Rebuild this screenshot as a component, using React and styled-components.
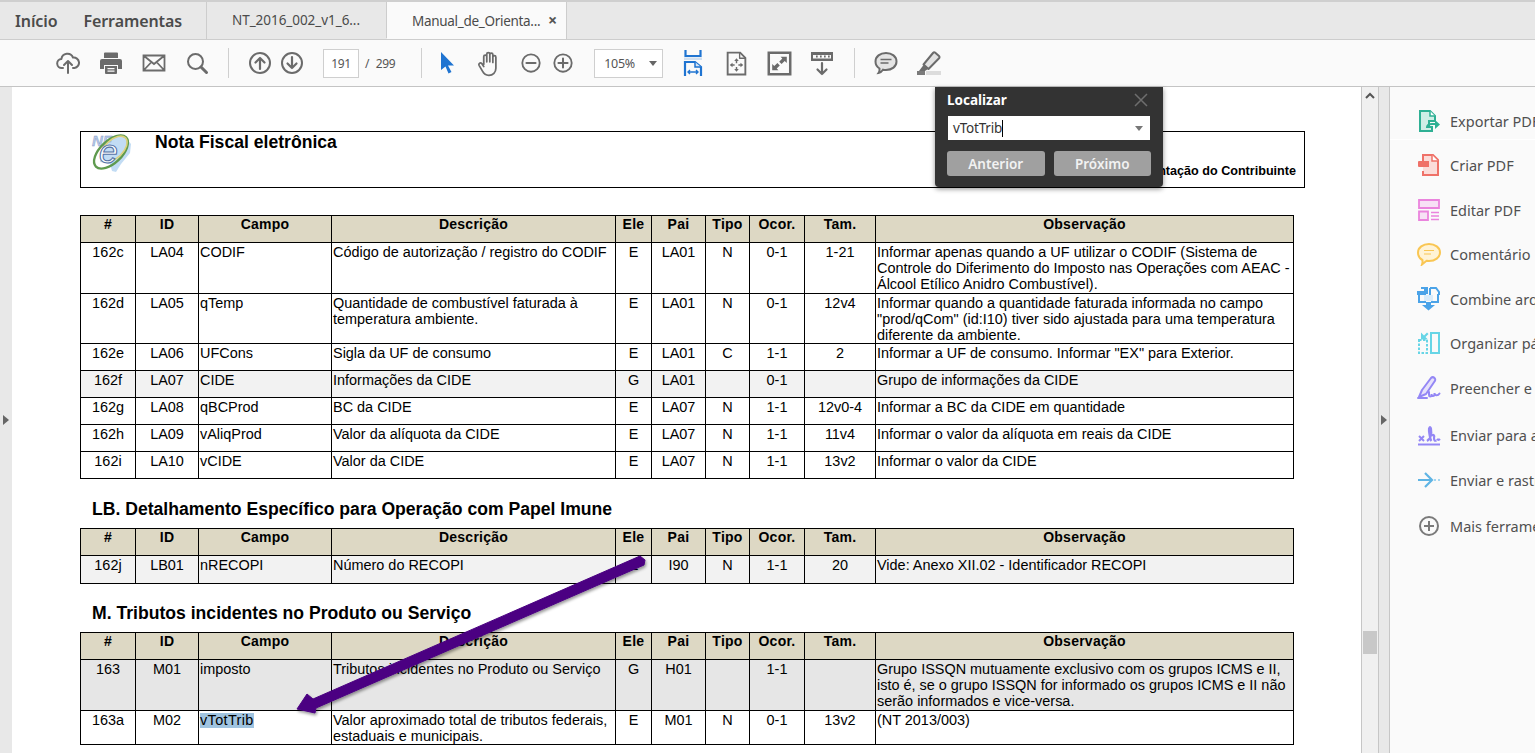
import React from "react";
import styled, { createGlobalStyle } from "styled-components";

const Global = createGlobalStyle`
  html, body { margin: 0; padding: 0; height: 100%; overflow: hidden; background: #fff; }
  #root { height: 753px; overflow: hidden; }
  * { box-sizing: border-box; }
`;

const UI = `"Noto Sans", "Open Sans", sans-serif`;
const DOC = `"Liberation Sans", Arial, sans-serif`;

const Shell = styled.div`
  width: 1535px; height: 753px; display: flex; flex-direction: column; overflow: hidden;
  font-family: ${UI}; position: relative;
`;
const TabBar = styled.div`
  flex: 0 0 39px; display: flex; background: #e8e8e8;
  border-top: 2px solid #cfcfcf; border-bottom: 1px solid #cdcdcd; 
`;
const NavTabs = styled.div`
  width: 207px; display: flex; align-items: center; gap: 26px; padding: 0 0 0 15px;
  border-right: 1px solid #cdcdcd;
`;
const NavLink = styled.span`
  font-size: 16px; font-weight: 600; color: #4b4b4b; letter-spacing: -0.1px;
`;
const DocTab = styled.div`
  width: ${p => p.$w}px; height: ${p => p.$active ? 37 : 36}px; display: flex; align-items: center;
  padding-left: 25px; font-size: 13.5px; color: #4b4b4b; position: relative; z-index: 1;
  background: ${p => p.$active ? "#fafafa" : "#e8e8e8"};
  border-right: 1px solid #cdcdcd;
  letter-spacing: ${p => p.$active ? -0.3 : -0.05}px;
`;
const TabClose = styled.span`
  position: absolute; left: 161px; top: 7px; font-size: 16px; font-weight: 700; color: #555;
`;
const Toolbar = styled.div`
  flex: 0 0 47px; display: flex; align-items: center; background: #fafafa; border-bottom: 1px solid #c4c4c4;
  padding-left: 52px;
`;
const Group = styled.div`
  display: flex; align-items: center; gap: ${p => p.$gap || 0}px; margin-left: ${p => p.$ml || 0}px;
`;
const Tool = styled.div`
  width: 32px; height: 32px; display: flex; align-items: center; justify-content: center; color: #6b6b6b;
`;
const Sep = styled.div`
  width: 1px; height: 30px; background: #cfcfcf; margin-left: ${p => p.$ml}px;
`;
const PageBox = styled.div`
  width: 36px; height: 29px; margin-left: 15px; background: #fff; border: 1px solid #cfcfcf;
  display: flex; align-items: center; justify-content: center; font-size: 12px; color: #555; letter-spacing: -0.3px;
`;
const PageTotal = styled.span`
  font-size: 12px; color: #555; margin-left: 6px; letter-spacing: -0.4px; word-spacing: 4px; white-space: pre;
`;
const ZoomBox = styled.div`
  width: 69px; height: 29px; margin-left: 15px; background: #fff; border: 1px solid #cfcfcf;
  display: flex; align-items: center; justify-content: space-between; padding: 0 5px 0 9px;
  font-size: 12.5px; color: #555; letter-spacing: -0.3px;
`;
const Caret = styled.span`
  width: 0; height: 0; border-left: 4px solid transparent; border-right: 4px solid transparent;
  border-top: 5px solid ${p => p.$c || "#666"};
`;
const Main = styled.div`
  flex: 1; display: flex; min-height: 0; position: relative;
`;
const Rail = styled.div`
  flex: 0 0 12px; background: #e8e8e8; display: flex; align-items: center; justify-content: flex-start;
  padding-left: 3px;
`;
const TriRight = styled.span`
  display: block; width: 0; height: 0; border-top: 5px solid transparent; border-bottom: 5px solid transparent;
  border-left: 6px solid #666;
`;
const PageArea = styled.div`
  flex: 0 0 1349px; background: #fff; padding: 44px 0 0 68px; position: relative; overflow: hidden;
  font-family: ${DOC}; color: #000;
`;
const DocHead = styled.div`
  width: 1225px; height: 57px; border: 1px solid #000; border-bottom-width: 1.5px; position: relative;
  display: flex; background: #fff;
`;
const LogoCell = styled.div`
  width: 65px; padding: 0 0 0 9px;
`;
const DocTitle = styled.div`
  font-size: 17.6px; font-weight: 700; padding: 0 0 0 9px; flex: 1;
`;
const DocSub = styled.div`
  align-self: flex-end; font-size: 12.6px; font-weight: 700; padding: 0 8px 9px 0;
`;
const Table = styled.table`
  width: 1213px; table-layout: fixed; border-collapse: collapse; margin-top: ${p => p.$mt || 0}px;
  font-size: 14.45px; line-height: 16.1px;
  td, th { border: 1px solid #000; padding: 1px 1px 0; vertical-align: top; overflow: hidden; }
  th { padding-top: 0; }
`;
const HeadCell = styled.th`
  background: #ddd8c4; font-weight: 700; text-align: center; font-size: 14px; letter-spacing: 0.25px;
`;
const Row = styled.tr`
  height: ${p => p.$h}px; background: ${p => p.$bg || "#fff"};
`;
const Cell = styled.td`
  text-align: ${p => p.$center ? "center" : "left"}; white-space: pre-line;
`;
const SectionTitle = styled.div`
  font-size: 17.6px; font-weight: 700; margin: ${p => p.$mt}px 0 0 12px; line-height: 20px; height: ${p => p.$h}px;
`;
const Highlight = styled.span`
  background: #a0c4e0; display: inline-block; line-height: 15px; letter-spacing: 0.35px;
`;
const Arrow = styled.svg`
  position: absolute; left: 0; top: 0; pointer-events: none;
`;
const ScrollTrack = styled.div`
  flex: 0 0 17px; background: #f0f0f0; border-left: 1px solid #c6c6c6; position: relative;
  display: flex; justify-content: center; padding-top: 5px;
`;
const Thumb = styled.div`
  position: absolute; left: 1px; right: 1px; top: 544px; height: 23px; background: #c8c8c8;
`;
const Handle = styled.div`
  flex: 0 0 12px; background: #e8e8e8; border-left: 1px solid #c6c6c6; border-right: 1px solid #c6c6c6;
  display: flex; align-items: center; padding-left: 2px;
`;
const Panel = styled.div`
  flex: 1; background: #fafafa; padding-top: 12px; overflow: hidden; position: relative;
`;
const PanelItem = styled.div`
  height: ${p => p.$h}px; display: flex; align-items: center; padding-left: 26px; gap: 9px; white-space: nowrap;
  font-size: 14.5px; color: #505050;
  ${p => p.$line ? "padding-top: 3px; margin-bottom: 3px; border-bottom: 1px solid #fff;" : ""}
`;
const PanelIcon = styled.span`
  flex: 0 0 25px; display: flex; justify-content: center;
`;
const Finder = styled.div`
  position: absolute; left: 935px; top: 0; width: 228px; height: 100px; background: #333; border-radius: 0 0 4px 4px;
  box-shadow: 0 2px 5px rgba(0,0,0,.45); padding: 3px 12px 0; z-index: 5; font-family: ${UI};
`;
const FinderHead = styled.div`
  display: flex; justify-content: space-between; align-items: center; height: 19px; padding-right: 3px;
  font-size: 13.5px; font-weight: 700; color: #fff;
`;
const FinderInput = styled.div`
  margin: 7px 0 0 1px; width: 202px; height: 24px; background: #fff; display: flex; align-items: center;
  justify-content: space-between; padding: 0 7px 0 5px; font-size: 13.5px; color: #333; letter-spacing: -0.2px;
`;
const TextCaret = styled.span`
  display: inline-block; width: 1px; height: 17px; background: #000; vertical-align: middle;
`;
const FinderButtons = styled.div`
  display: flex; gap: 9px; margin-top: 11px;
`;
const FinderButton = styled.div`
  width: 98px; height: 25px; background: #a0a0a0; border-radius: 3px; color: #f2f2f2; font-size: 13.5px; font-weight: 600;
  display: flex; align-items: center; justify-content: center;
`;

const s = { fill: "none", stroke: "currentColor", strokeWidth: 2, strokeLinecap: "round", strokeLinejoin: "round" };
const Ico = ({ children, size = 24, vb = "0 0 24 24" }) => <svg width={size} height={size} viewBox={vb}>{children}</svg>;

const Upload = () => <Ico><path {...s} d="M7 17H6a4.5 4.5 0 0 1-.6-9A6 6 0 0 1 17 6.6 5 5 0 0 1 18.5 17H17" /><path {...s} d="M12 22V10M8 14l4-4 4 4" /></Ico>;
const Printer = () => <Ico><path fill="currentColor" d="M6 1.500h12a1 1 0 0 1 1 1V7H5V2.500a1 1 0 0 1 1-1zM3 8h18a2 2 0 0 1 2 2v8h-4v-4H5v4H1v-8a2 2 0 0 1 2-2z" /><path fill="currentColor" d="M6 15h12v7a1 1 0 0 1-1 1H7a1 1 0 0 1-1-1z" /><path fill="#fafafa" d="M8.500 17h7v1.200h-7zM8.500 19.500h7v1.200h-7z" /></Ico>;
const Mail = () => <Ico><path {...s} strokeWidth="1.800" strokeLinecap="butt" strokeLinejoin="miter" d="M1.500 4.500h21v15h-21zM1.500 4.500l10.500 8.500 10.500-8.500M1.500 19.500l8-8.500M22.500 19.500l-8-8.500" /></Ico>;
const Search = () => <Ico><circle {...s} cx="10.500" cy="10.500" r="7.500" /><path {...s} strokeWidth="3" d="M16 16l5.500 5.500" /></Ico>;
const CircleArrow = ({ up }) => <Ico><circle {...s} cx="12" cy="12" r="10" />{up ? <path {...s} strokeWidth="2.200" d="M12 18V7M7.500 11.500L12 7l4.500 4.500" /> : <path {...s} strokeWidth="2.200" d="M12 6v11M7.500 12.500L12 17l4.500-4.500" />}</Ico>;
const Pointer = () => <Ico><path fill="#1f74d1" d="M6 1l13 13.500h-6l3.500 6.500-3 1.500-3-7L6 19z" /></Ico>;
const HandIco = () => <Ico size={28}><path {...s} strokeWidth="1.500" d="M7.500 13V6.500a1.300 1.300 0 0 1 2.600 0V11M10.100 11V4.300a1.300 1.300 0 0 1 2.600 0V11M12.700 11V4.800a1.300 1.300 0 0 1 2.600 0V11M15.300 11.500V7a1.300 1.300 0 0 1 2.600 0v9.500c0 3.500-2.500 6-6 6-3 0-4.500-1.500-5.500-3.500L3.500 14c-.8-1.500 1.200-2.800 2.300-1.500L7.500 15" /></Ico>;
const ZoomC = ({ plus }) => <Ico size={22}><circle {...s} cx="12" cy="12" r="9.500" /><path {...s} strokeWidth="2.200" d={plus ? "M7 12h10M12 7v10" : "M7 12h10"} /></Ico>;
const FitIco = () => <Ico size={26} vb="0 0 26 26"><g fill="none" stroke="#1f74d1" strokeWidth="2.200"><path d="M5.500 0v6h15V0" /><path d="M5 26v-14h10l6 5v9" /></g><path fill="#cfdff0" d="M4 7.500h18V10H4z" /><path d="M15 12v5h6" fill="#d8e6f4" stroke="#1f74d1" strokeWidth="1.500" /><path stroke="#1f74d1" strokeWidth="1.400" fill="none" d="M8 22h10M10 20l-2 2 2 2M16 20l2 2-2 2" /></Ico>;
const PageMove = () => <Ico size={25}><path {...s} strokeWidth="1.800" strokeLinecap="butt" strokeLinejoin="miter" d="M3.500 1.500h12l5 5v16h-17z" /><path {...s} strokeWidth="1.300" strokeLinecap="butt" d="M15 1.500v5.500h5.500" /><path fill="currentColor" d="M12 7l2.200 2.700h-1.500v2h-1.400v-2H9.800zM12 20l-2.200-2.700h1.500v-2h1.400v2h1.500zM5.500 13.500l2.700-2.200v1.500h2v1.400h-2v1.500zM18.500 13.500l-2.700 2.200v-1.500h-2v-1.400h2v-1.500z" /></Ico>;
const Expand = () => <Ico size={25}><path {...s} strokeWidth="2.400" strokeLinecap="butt" strokeLinejoin="miter" d="M1.700 1.700h20.600v20.600H1.700z" /><path fill="#fff" d="M3 3h2v.8H3zM6 3h2v.8H6zM9 3h2v.8H9z" /><path fill="currentColor" d="M13 5.500h6v6l-2-2-3 3-2.300-2.300 3-3zM11 18.500H5v-6l2 2 3-3 2.300 2.300-3 3z" /></Ico>;
const Ruler = () => <Ico size={26} vb="0 0 26 26"><path fill="currentColor" d="M2 2h22v9H2z" /><path fill="#fafafa" d="M4 5h18v3.500H4z" /><path fill="currentColor" d="M7 5.500h1.700v2H7zM11 5.500h1.700v2H11zM15 5.500h1.700v2H15zM19 5.500h1.700v2H19z" /><path {...s} strokeWidth="2.200" d="M13 13v11M8.500 19.500L13 24l4.500-4.500" /></Ico>;
const Comment = () => <Ico size={26} vb="0 0 26 26"><path fill="#e4e4e4" stroke="currentColor" strokeWidth="2" d="M13 3c6 0 10.500 3.500 10.500 8.500S19 20 13 20c-1 0-2 0-3-.3-1 1.500-2.500 3-4.500 3.300 1-1.500 1.200-3 1-4.500C4 17 2.500 14.500 2.500 11.500 2.500 6.500 7 3 13 3z" /><path stroke="currentColor" strokeWidth="1.300" fill="none" d="M7.500 9.500h11M7.500 13h8" /></Ico>;
const Marker = () => <Ico size={26} vb="0 0 26 26"><path fill="#e2e2e2" stroke="currentColor" strokeWidth="2" strokeLinejoin="round" d="M19 2.500l4 3.500c.8.800.6 1.800-.2 2.500L12.500 19l-5-4.500L17 3c.6-.7 1.300-1 2-.5z" /><path fill="currentColor" d="M7.500 15l4.500 4-3 2H3z" /><path fill="#dcdcdc" d="M10 21h15v4H10z" /><path fill="currentColor" d="M1 21h8v4H1z" opacity=".9" /></Ico>;

const ExportIco = () => <Ico><path fill="#cfeee6" stroke="#2fb094" strokeWidth="2" d="M3 2h10l5 5v5h-6v6h3v4H3z" /><path fill="#fff" stroke="#2fb094" strokeWidth="1.500" d="M13 2v5h5" /><path stroke="#2fb094" strokeWidth="2.200" fill="none" d="M10 19c0-3 2-4 5-4h4" /><path fill="#2fb094" d="M18 11l5 4.500-5 4.500z" /></Ico>;
const CreateIco = () => <Ico><path fill="#fbdcd9" stroke="#ef7168" strokeWidth="2" d="M6 12V2h10l5 5v15H6v-4" /><path fill="#fff" stroke="#ef7168" strokeWidth="1.500" d="M15 2v6h6" /><path fill="#ef7168" d="M2 8h10v6H2a1 1 0 0 1-1-1V9a1 1 0 0 1 1-1z" /></Ico>;
const EditIco = () => <Ico><path fill="#f7e1f5" stroke="#ea84dd" strokeWidth="1.800" d="M2 2h20v8H2zM2 13.500h9V22H2z" /><path stroke="#ea84dd" strokeWidth="1.300" d="M14 14.500h8M14 18h8M14 21.500h8" /></Ico>;
const CommentIco = () => <Ico><path fill="#fff3d6" stroke="#f9c653" strokeWidth="2" d="M12 2c6 0 11 3.500 11 8.500S18 19 12 19c-1 0-2 0-2.500-.2L5 22.500c.5-1.500.7-3 .4-4.500C2.500 16.500 1 13.500 1 10.500 1 5.500 6 2 12 2z" /><path stroke="#f9c653" strokeWidth="1.200" d="M7 8.500h10M7 12h7" /></Ico>;
const CombineIco = () => <Ico size={25} vb="0 0 25 25"><path fill="#d9ecfb" d="M8 9h9v6H8z" /><path fill="none" stroke="#4ba3e8" strokeWidth="2" d="M3 8v8h7M5 2h6v6M9 9V2M22 8v8h-7M14 2h6l3 4v3M14 9V2" /><path fill="#4ba3e8" d="M1 5h7v4H1zM10 16h5v3h4l-6.500 5.500L6 19h4z" /></Ico>;
const OrganizeIco = () => <Ico><path fill="none" stroke="#67d5e6" strokeWidth="2" d="M14 2h8v20h-8z" /><path fill="none" stroke="#67d5e6" strokeWidth="2" strokeDasharray="2.500 1.500" d="M2 9h8v13H2z" /><path fill="#67d5e6" d="M4 1.500v7h7L8.500 6l3-3L10 1.500l-3 3z" /></Ico>;
const FillIco = () => <Ico><path fill="#e6e1fb" stroke="#9487f5" strokeWidth="2" strokeLinejoin="round" d="M2 21l3-7L14 2c1-1 2.500-1 3.500 0 1 1 1 2.500 0 3.500L9 18z" /><path fill="none" stroke="#9487f5" strokeWidth="2" strokeLinecap="round" d="M1 22h9M12 16v3c0 2 2.500 2 2.500 0v-1c0 2.500 3 2.500 3 0v-1c0 3 3.500 3 5 .5" /></Ico>;
const SignIco = () => <Ico><path stroke="#9487f5" strokeWidth="2" d="M1 21.500h22M2 13l5 5M7 13l-5 5" /><path fill="none" stroke="#9487f5" strokeWidth="2.200" d="M10 18c3-2 5-6 4-12-.5-3-2.500-2-2 2 .5 4 1.500 9 2.500 10M15 13c1-2 3-1 2 2 0 3 1 3 2.500 2.500M20 16c1 1 2 1 3 0" /></Ico>;
const TrackIco = () => <Ico><path fill="none" stroke="#5fb4e4" strokeWidth="2.200" d="M1 12h13M8 5l7 7-7 7" /><path stroke="#a3d6f0" strokeWidth="2" strokeDasharray="2 2" d="M17 12h7" /></Ico>;
const MoreIco = () => <Ico><circle cx="12" cy="12" r="9" fill="none" stroke="#7a7a7a" strokeWidth="2" /><path stroke="#7a7a7a" strokeWidth="2" d="M12 7v10M7 12h10" /></Ico>;

const Logo = () => (
  <svg width="44" height="42" viewBox="0 0 44 42">
    <path d="M22 4l13 1 6 7-1 9-9 11-5 8-4-1-2-7-10-2 2-12z" fill="#a8cdf0" opacity=".7" />
    <text x="2" y="14" fontFamily={DOC} fontSize="15" fontStyle="italic" fontWeight="700" fill="#b6c9e8" stroke="#7f97c4" strokeWidth=".4">NF</text>
    <ellipse cx="21" cy="20" rx="21" ry="11" transform="rotate(-44 21 20)" fill="none" stroke="#5f9a4e" strokeWidth="2.300" />
    <ellipse cx="24" cy="17" rx="16" ry="9" transform="rotate(-44 24 17)" fill="none" stroke="#dcd27c" strokeWidth="1.600" />
    <text x="9" y="31" fontFamily={DOC} fontSize="34" fontStyle="italic" fill="#fff" stroke="#5573a6" strokeWidth="1.100">e</text>
  </svg>
);

const cols = [55, 63, 133, 284, 36, 54, 44, 55, 71, 418];
const heads = ["#", "ID", "Campo", "Descrição", "Ele", "Pai", "Tipo", "Ocor.", "Tam.", "Observação"];

const t1 = [
  [51, "", "162c", "LA04", "CODIF", "Código de autorização / registro do CODIF", "E", "LA01", "N", "0-1", "1-21", "Informar apenas quando a UF utilizar o CODIF (Sistema de\nControle do Diferimento do Imposto nas Operações com AEAC -\nÁlcool Etílico Anidro Combustível)."],
  [50, "", "162d", "LA05", "qTemp", "Quantidade de combustível faturada à\ntemperatura ambiente.", "E", "LA01", "N", "0-1", "12v4", "Informar quando a quantidade faturada informada no campo\n\"prod/qCom\" (id:I10) tiver sido ajustada para uma temperatura\ndiferente da ambiente."],
  [27, "", "162e", "LA06", "UFCons", "Sigla da UF de consumo", "E", "LA01", "C", "1-1", "2", "Informar a UF de consumo. Informar \"EX\" para Exterior."],
  [27, "#f2f2f2", "162f", "LA07", "CIDE", "Informações da CIDE", "G", "LA01", "", "0-1", "", "Grupo de informações da CIDE"],
  [27, "", "162g", "LA08", "qBCProd", "BC da CIDE", "E", "LA07", "N", "1-1", "12v0-4", "Informar a BC da CIDE em quantidade"],
  [27, "", "162h", "LA09", "vAliqProd", "Valor da alíquota da CIDE", "E", "LA07", "N", "1-1", "11v4", "Informar o valor da alíquota em reais da CIDE"],
  [27, "", "162i", "LA10", "vCIDE", "Valor da CIDE", "E", "LA07", "N", "1-1", "13v2", "Informar o valor da CIDE"],
];
const t2 = [
  [28, "#f2f2f2", "162j", "LB01", "nRECOPI", "Número do RECOPI", "E", "I90", "N", "1-1", "20", "Vide: Anexo XII.02 - Identificador RECOPI"],
];
const t3 = [
  [51, "#e6e6e6", "163", "M01", "imposto", "Tributos incidentes no Produto ou Serviço", "G", "H01", "", "1-1", "", "Grupo ISSQN mutuamente exclusivo com os grupos ICMS e II,\nisto é, se o grupo ISSQN for informado os grupos ICMS e II não\nserão informados e vice-versa."],
  [34, "", "163a", "M02", <Highlight>vTotTrib</Highlight>, "Valor aproximado total de tributos federais,\nestaduais e municipais.", "E", "M01", "N", "0-1", "13v2", "(NT 2013/003)"],
];
const leftCols = new Set([2, 3, 9]);

const DataTable = ({ rows, mt }) => (
  <Table $mt={mt}>
    <colgroup>{cols.map((w, i) => <col key={i} style={{ width: w }} />)}</colgroup>
    <thead><Row $h={27} $bg="#ddd8c4">{heads.map(h => <HeadCell key={h}>{h}</HeadCell>)}</Row></thead>
    <tbody>
      {rows.map((r, i) => (
        <Row key={i} $h={r[0]} $bg={r[1]}>
          {r.slice(2).map((c, j) => <Cell key={j} $center={!leftCols.has(j)}>{c}</Cell>)}
        </Row>
      ))}
    </tbody>
  </Table>
);

const panel = [
  [ExportIco, "Exportar PDF", 41, 1],
  [CreateIco, "Criar PDF", 44.5],
  [EditIco, "Editar PDF", 44.5],
  [CommentIco, "Comentário", 44.5],
  [CombineIco, "Combine arquivos", 44.5],
  [OrganizeIco, "Organizar páginas", 43.5],
  [FillIco, "Preencher e assinar", 47],
  [SignIco, "Enviar para assinatura", 46],
  [TrackIco, "Enviar e rastrear", 45.5],
  [MoreIco, "Mais ferramentas", 46],
];

export default function App() {
  return (
    <Shell>
      <Global />
      <TabBar>
        <NavTabs><NavLink>Início</NavLink><NavLink>Ferramentas</NavLink></NavTabs>
        <DocTab $w={180}>NT_2016_002_v1_6...</DocTab>
        <DocTab $w={180} $active>Manual_de_Orienta...<TabClose>×</TabClose></DocTab>
      </TabBar>
      <Toolbar>
        <Group $gap={11}>
          <Tool><Upload /></Tool><Tool><Printer /></Tool><Tool><Mail /></Tool><Tool><Search /></Tool>
        </Group>
        <Sep $ml={15} />
        <Group $ml={15}><Tool><CircleArrow up /></Tool><Tool><CircleArrow /></Tool></Group>
        <PageBox>191</PageBox>
        <PageTotal>/ 299</PageTotal>
        <Sep $ml={26} />
        <Group $ml={9} $gap={10}><Tool><Pointer /></Tool><Tool><HandIco /></Tool></Group>
        <Group $ml={10} $gap={0}><Tool><ZoomC /></Tool><Tool><ZoomC plus /></Tool></Group>
        <ZoomBox>105%<Caret /></ZoomBox>
        <Group $ml={14} $gap={11}>
          <Tool><FitIco /></Tool><Tool><PageMove /></Tool><Tool><Expand /></Tool><Tool><Ruler /></Tool>
        </Group>
        <Sep $ml={16} />
        <Group $ml={15} $gap={11}><Tool><Comment /></Tool><Tool><Marker /></Tool></Group>
      </Toolbar>
      <Main>
        <Rail><TriRight /></Rail>
        <PageArea>
          <DocHead>
            <LogoCell><Logo /></LogoCell>
            <DocTitle>Nota Fiscal eletrônica</DocTitle>
            <DocSub>Manual de Orientação do Contribuinte</DocSub>
          </DocHead>
          <DataTable rows={t1} mt={27} />
          <SectionTitle $mt={20} $h={29}>LB. Detalhamento Específico para Operação com Papel Imune</SectionTitle>
          <DataTable rows={t2} />
          <SectionTitle $mt={19} $h={29}>M. Tributos incidentes no Produto ou Serviço</SectionTitle>
          <DataTable rows={t3} />
          <Arrow width="1349" height="667">
            <defs>
              <filter id="sh" x="-10%" y="-10%" width="120%" height="120%">
                <feDropShadow dx="1" dy="2" stdDeviation="1.500" floodColor="#000" floodOpacity=".4" />
              </filter>
            </defs>
            <path filter="url(#sh)" fill="#4b0082" stroke="#4b0082" strokeLinejoin="round" strokeWidth="1"
              d="M628 469 L633 473 L632 478 L304 621 L303 626 L285 622 L295 607 L301 612 Z" />
          </Arrow>
        </PageArea>
        <ScrollTrack>
          <svg width="10" height="7" viewBox="0 0 10 7"><path d="M1 6l4-4 4 4" fill="none" stroke="#555" strokeWidth="2" /></svg>
          <Thumb />
        </ScrollTrack>
        <Handle><TriRight /></Handle>
        <Panel>
          {panel.map(([I, label, h, line]) => (
            <PanelItem key={label} $h={h} $line={line}><PanelIcon><I /></PanelIcon>{label}</PanelItem>
          ))}
        </Panel>
        <Finder>
          <FinderHead>Localizar
            <svg width="14" height="14" viewBox="0 0 14 14"><path d="M1 1l12 12M13 1L1 13" stroke="#6e6e6e" strokeWidth="1.500" /></svg>
          </FinderHead>
          <FinderInput><span>vTotTrib<TextCaret /></span><Caret $c="#777" /></FinderInput>
          <FinderButtons><FinderButton>Anterior</FinderButton><FinderButton>Próximo</FinderButton></FinderButtons>
        </Finder>
      </Main>
    </Shell>
  );
}
